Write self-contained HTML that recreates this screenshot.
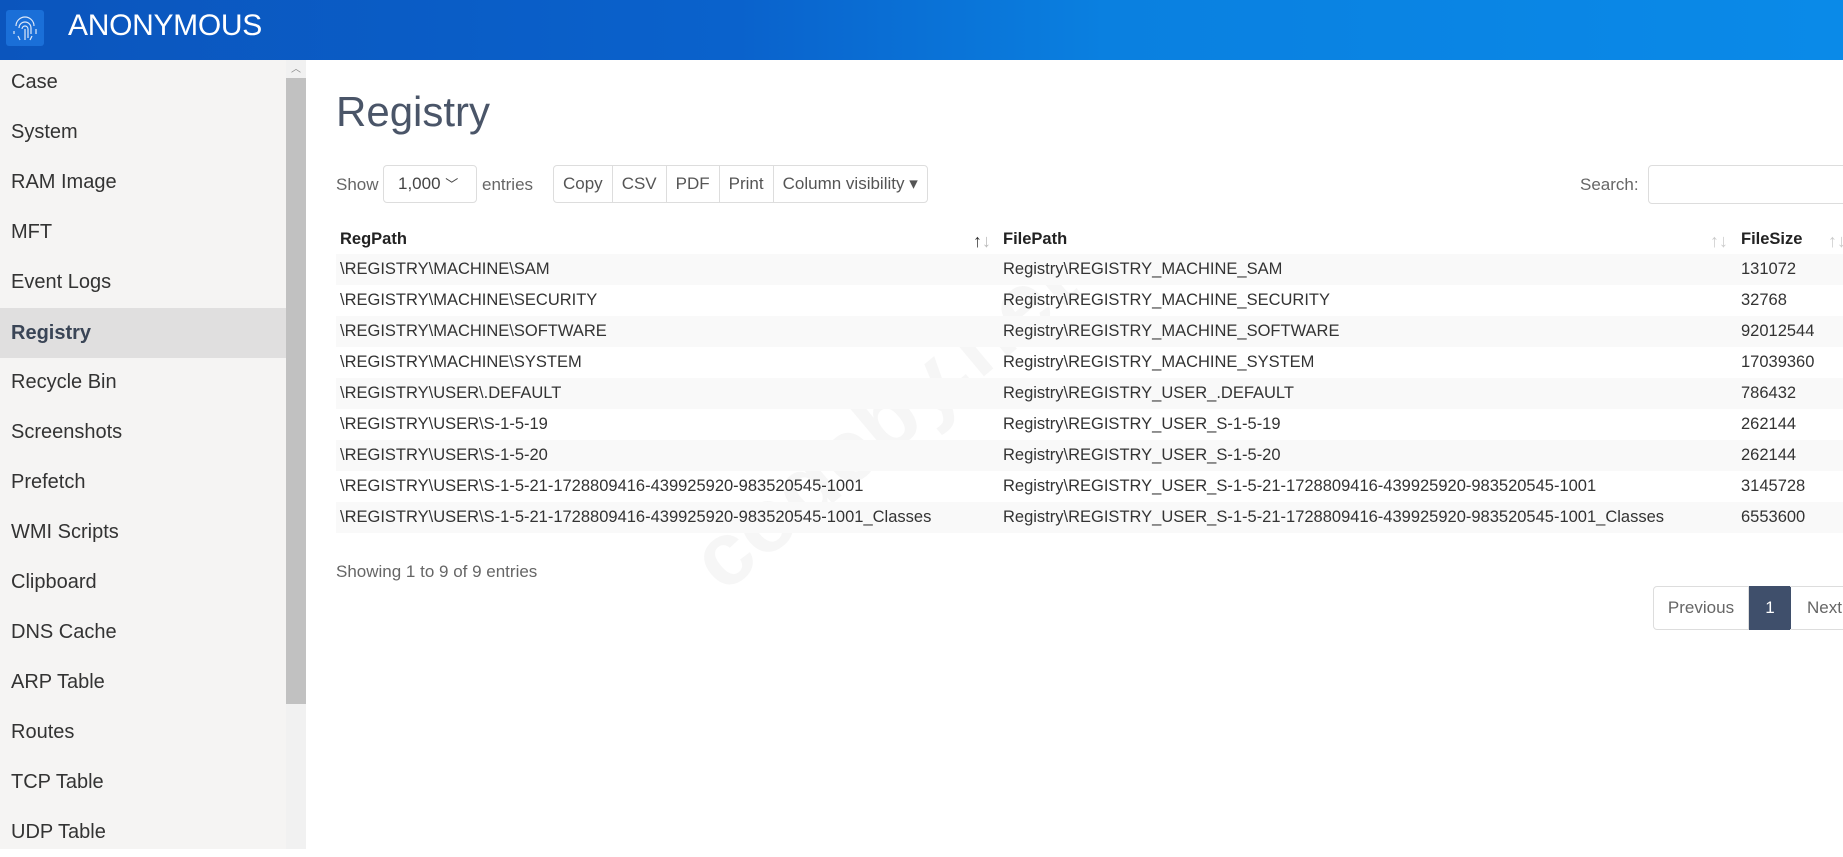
<!DOCTYPE html>
<html><head><meta charset="utf-8"><style>
*{box-sizing:border-box;margin:0;padding:0}
body{width:1843px;height:849px;overflow:hidden;font-family:"Liberation Sans",sans-serif;background:#fff;position:relative;color:#333}
.hdr{position:absolute;left:0;top:0;width:1843px;height:60px;background:linear-gradient(90deg,#0b55bd 0%,#0a62cc 40%,#0a80e0 60%,#0a8ae8 100%)}
.logo{position:absolute;left:6px;top:10px;width:38px;height:36px;background:#1a6fd8;border-radius:3px}
.title{position:absolute;left:68px;top:9px;color:#fff;font-size:30px;letter-spacing:-0.3px}
.side{position:absolute;left:0;top:60px;width:286px;height:789px;background:#f5f4f3}
.side div{position:absolute;left:0;width:286px;height:50px;line-height:50px;padding-left:11px;font-size:20px;color:#333}
.side .act{background:#e0dfdf;font-weight:bold;color:#3a4556}
.sb{position:absolute;left:286px;top:60px;width:20px;height:789px;background:#f1f1f1}
.thumb{position:absolute;left:286px;top:78px;width:20px;height:626px;background:#c1c1c1}
.h1{position:absolute;left:336px;top:88px;font-size:42px;color:#4a5568}
.lbl{position:absolute;font-size:17px;color:#666}
.sel{position:absolute;left:383px;top:165px;width:94px;height:38px;border:1px solid #ddd;border-radius:4px;font-size:17px;line-height:36px;padding-left:14px;color:#444}
.btns{position:absolute;left:553px;top:165px;height:38px;border:1px solid #ddd;border-radius:4px;display:flex}
.btns span{height:36px;line-height:36px;padding:0 9px;font-size:17px;color:#555;border-right:1px solid #ddd}
.btns span:last-child{border-right:none}
.srch{position:absolute;left:1648px;top:165px;width:220px;height:39px;border:1px solid #ddd;border-radius:4px}
.th{position:absolute;top:230px;font-size:16.5px;font-weight:bold;color:#222}
.row{position:absolute;left:336px;width:1507px;height:31px}
.row.o{background:#f9f9f9}
.row span{position:absolute;top:6px;font-size:16.5px;color:#333;white-space:nowrap}
.arr{position:absolute;top:231px;font-size:18px;color:#ccc}
.wm{position:absolute;left:650px;top:370px;font-size:90px;font-weight:bold;color:rgba(0,0,0,0.035);transform:rotate(-40deg)}
.pg{position:absolute;top:586px;height:44px;border:1px solid #ddd;font-size:17px;line-height:42px;text-align:center;color:#666}
</style></head><body>
<div class="hdr"><div class="logo"><svg width="38" height="36" viewBox="0 0 38 36"><g fill="none" stroke="#dfe9f8" stroke-width="1.2"><path d="M10 16a9 9 0 0 1 18 0"/><path d="M13 18a6 6 0 0 1 12 0v6"/><path d="M16 19a3 3 0 0 1 6 0v9"/><path d="M19 19v11"/><path d="M8 21v3M30 19v5M12 26l2 4M26 26l-2 4"/></g></svg></div><div class="title">ANONYMOUS</div></div>
<div class="side">
<div style="top:-3px">Case</div><div style="top:47px">System</div><div style="top:97px">RAM Image</div><div style="top:147px">MFT</div><div style="top:197px">Event Logs</div><div class="act" style="top:248px">Registry</div><div style="top:297px">Recycle Bin</div><div style="top:347px">Screenshots</div><div style="top:397px">Prefetch</div><div style="top:447px">WMI Scripts</div><div style="top:497px">Clipboard</div><div style="top:547px">DNS Cache</div><div style="top:597px">ARP Table</div><div style="top:647px">Routes</div><div style="top:697px">TCP Table</div><div style="top:747px">UDP Table</div>
</div>
<div class="sb"></div><div class="thumb"></div>
<div style="position:absolute;left:291px;top:60px;font-size:10px;color:#888">︿</div>
<div class="h1">Registry</div>
<div class="lbl" style="left:336px;top:175px">Show</div>
<div class="sel">1,000 <span style="font-size:13px">﹀</span></div>
<div class="lbl" style="left:482px;top:175px">entries</div>
<div class="btns"><span>Copy</span><span>CSV</span><span>PDF</span><span>Print</span><span>Column visibility ▾</span></div>
<div class="lbl" style="left:1580px;top:175px">Search:</div>
<div class="srch"></div>
<div class="wm">codeby.net</div>
<div class="th" style="left:340px">RegPath</div>
<div class="th" style="left:1003px">FilePath</div>
<div class="th" style="left:1741px">FileSize</div>
<div class="arr" style="left:973px;color:#333">↑<span style="color:#bbb">↓</span></div>
<div class="arr" style="left:1710px">↑↓</div>
<div class="arr" style="left:1828px">↑↓</div>
<div class="row o" style="top:254px"><span style="left:4px">\REGISTRY\MACHINE\SAM</span><span style="left:667px">Registry\REGISTRY_MACHINE_SAM</span><span style="left:1405px">131072</span></div>
<div class="row" style="top:285px"><span style="left:4px">\REGISTRY\MACHINE\SECURITY</span><span style="left:667px">Registry\REGISTRY_MACHINE_SECURITY</span><span style="left:1405px">32768</span></div>
<div class="row o" style="top:316px"><span style="left:4px">\REGISTRY\MACHINE\SOFTWARE</span><span style="left:667px">Registry\REGISTRY_MACHINE_SOFTWARE</span><span style="left:1405px">92012544</span></div>
<div class="row" style="top:347px"><span style="left:4px">\REGISTRY\MACHINE\SYSTEM</span><span style="left:667px">Registry\REGISTRY_MACHINE_SYSTEM</span><span style="left:1405px">17039360</span></div>
<div class="row o" style="top:378px"><span style="left:4px">\REGISTRY\USER\.DEFAULT</span><span style="left:667px">Registry\REGISTRY_USER_.DEFAULT</span><span style="left:1405px">786432</span></div>
<div class="row" style="top:409px"><span style="left:4px">\REGISTRY\USER\S-1-5-19</span><span style="left:667px">Registry\REGISTRY_USER_S-1-5-19</span><span style="left:1405px">262144</span></div>
<div class="row o" style="top:440px"><span style="left:4px">\REGISTRY\USER\S-1-5-20</span><span style="left:667px">Registry\REGISTRY_USER_S-1-5-20</span><span style="left:1405px">262144</span></div>
<div class="row" style="top:471px"><span style="left:4px">\REGISTRY\USER\S-1-5-21-1728809416-439925920-983520545-1001</span><span style="left:667px">Registry\REGISTRY_USER_S-1-5-21-1728809416-439925920-983520545-1001</span><span style="left:1405px">3145728</span></div>
<div class="row o" style="top:502px"><span style="left:4px">\REGISTRY\USER\S-1-5-21-1728809416-439925920-983520545-1001_Classes</span><span style="left:667px">Registry\REGISTRY_USER_S-1-5-21-1728809416-439925920-983520545-1001_Classes</span><span style="left:1405px">6553600</span></div>
<div class="lbl" style="left:336px;top:562px">Showing 1 to 9 of 9 entries</div>
<div class="pg" style="left:1653px;width:96px;border-radius:4px 0 0 4px">Previous</div>
<div class="pg" style="left:1749px;width:42px;background:#3f4f6b;border-color:#3f4f6b;color:#fff">1</div>
<div class="pg" style="left:1790px;width:70px;border-left:none">Next</div>
</body></html>
